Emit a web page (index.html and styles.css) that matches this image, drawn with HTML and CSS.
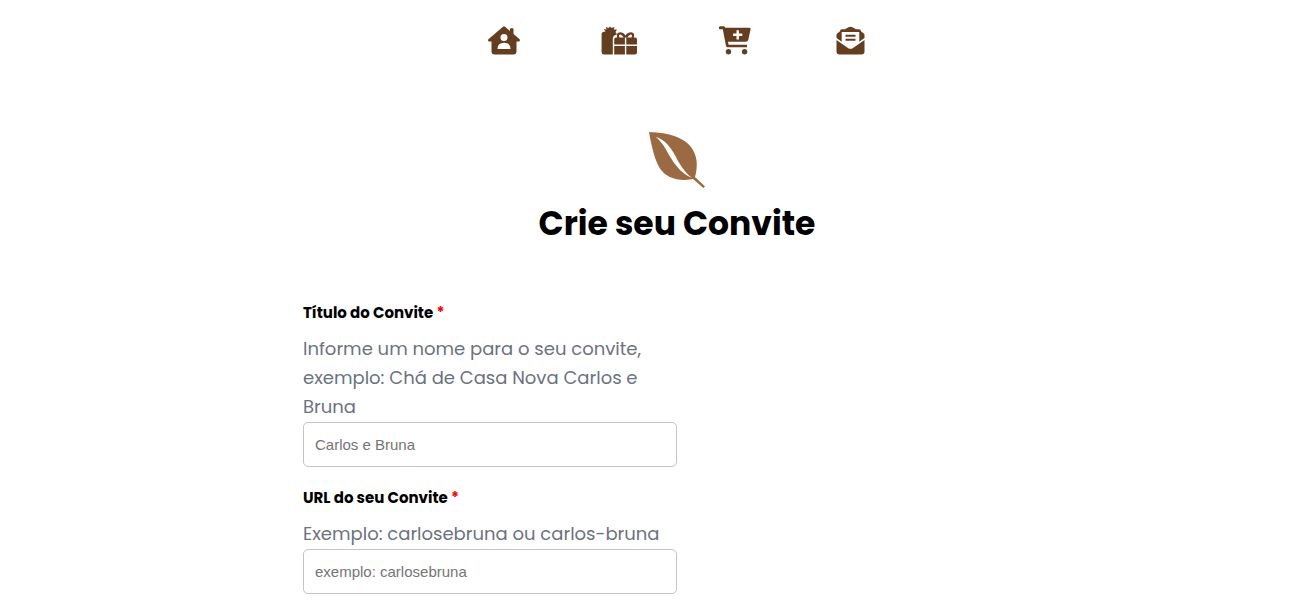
FILE: index.html
```html
<!DOCTYPE html>
<html lang="pt-BR">
<head>
<meta charset="utf-8">
<meta name="viewport" content="width=device-width, initial-scale=1">
<title>Crie seu Convite</title>
<link rel="stylesheet" href="styles.css">
</head>
<body>
<nav class="nav" aria-label="Principal">
  <a class="nav-link" href="#" aria-label="Início">
    <svg class="nav-icon" viewBox="0 0 36 32"><path fill-rule="evenodd" d="M18 1.700Q19 .9 20 1.700L25 6V4Q25 3.200 25.800 3.200H27.700Q28.500 3.200 28.500 4V9L34.600 14.200Q35.300 15.500 34.300 16.600H31.500V26.500Q31.500 29.500 28.500 29.500H9.500Q6.500 29.500 6.500 26.500V16.600H3.700Q2.600 15.500 3.400 14.200ZM19 9A3.500 3.500 0 1 0 19 16A3.500 3.500 0 1 0 19 9ZM12.500 24H25.500Q25.500 17.800 19 17.800T12.500 24Z"/></svg>
  </a>
  <a class="nav-link" href="#" aria-label="Presentes">
    <svg class="nav-icon" viewBox="0 0 36 32"><path d="M2.800 4 5.500 4.500 5 2 7.500 3 9 1.500 10.500 3 13.500 2 12.800 4.500 16 4.500 14.500 7 16 9.500Q11.800 10 11.800 14V29.500H3Q.6 29.500 .6 27V9Q.6 6.500 4.500 6.500Z"/><path fill-rule="evenodd" d="M15 12.500H16.200Q14.800 7.500 19 7.200Q22.300 7.200 24.500 10.500Q26.700 7.200 30 7.200Q34.200 7.500 32.800 12.500H34Q36 12.500 36 14.500V19.400H25.300V12.500H23.900V19.400H13.200V14.500Q13.200 12.500 15 12.500ZM18.500 12.500H22.700Q20.500 9.400 19.200 9.400Q17.300 9.400 18.500 12.500ZM26.300 12.500H30.500Q31.700 9.400 29.800 9.400Q28.500 9.400 26.300 12.500Z"/><path d="M13.200 21H23.900V29.500H13.200ZM25.300 21H36V27.500Q36 29.500 34 29.500H25.300Z"/></svg>
  </a>
  <a class="nav-link" href="#" aria-label="Adicionar ao carrinho">
    <svg class="nav-icon" viewBox="0 0 36 32"><path fill-rule="evenodd" d="M3.200 1.200H6.500Q8 1.200 8.400 2.700H32.500Q34 2.700 33.600 4.200L31.300 14.700Q30.800 16.800 28.700 16.800H11L11.600 19.700H30V22.200H10.600Q9.300 22.200 9 20.900L5.800 4.200H3.200Q1.800 4.200 1.800 2.700T3.200 1.200ZM19.500 5.200V8.600H16.100V11H19.500V14.400H21.900V11H25.300V8.600H21.900V5.200Z"/><circle cx="11.500" cy="26.800" r="2.700"/><circle cx="27.600" cy="26.800" r="2.700"/></svg>
  </a>
  <a class="nav-link" href="#" aria-label="Convites">
    <svg class="nav-icon" viewBox="0 0 36 32"><path d="M3.500 13V10Q3.500 9 4.500 8.200L7 6.200Q7 4.200 9 4.200H12L15.500 2.200Q17.500 1.200 19.500 2.200L23 4.200H26Q28 4.200 28 6.200L30.500 8.200Q31.500 9 31.500 10V13L26.300 16.700V7H8.700V16.700Z"/><path d="M3.500 15 15.300 23.200Q17.500 24.500 19.700 23.200L31.500 15V26.500Q31.500 29.500 28.500 29.500H6.500Q3.500 29.500 3.500 26.500Z"/><path d="M12.500 9.700H22.500V11.700H12.500ZM12.500 13.700H22.500V15.700H12.500Z"/></svg>
  </a>
</nav>
<main class="page">
  <header class="intro">
    <svg class="leaf" viewBox="0 0 56 56" aria-hidden="true"><path fill-rule="evenodd" d="M0 0Q31 1 42 15Q51 27 46 45L56 54.500L54.500 56L44 47Q22 51 12 38Q5 29 0 0ZM7 5Q14 11 20 23Q30 41 43 46Q36 41 29 29Q19 8 7 5Z"/></svg>
    <h1 class="title">Crie seu Convite</h1>
  </header>
  <form class="form">
    <div class="field">
      <label class="label" for="titulo">Título do Convite <span class="required">*</span></label>
      <p class="hint" id="titulo-hint">Informe um nome para o seu convite, exemplo: Chá de Casa Nova Carlos e Bruna</p>
      <input class="input" id="titulo" type="text" placeholder="Carlos e Bruna" aria-describedby="titulo-hint" required>
    </div>
    <div class="field">
      <label class="label" for="url">URL do seu Convite <span class="required">*</span></label>
      <p class="hint" id="url-hint">Exemplo: carlosebruna ou carlos-bruna</p>
      <input class="input" id="url" type="text" placeholder="exemplo: carlosebruna" aria-describedby="url-hint" required>
    </div>
  </form>
</main>
</body>
</html>
```
FILE: styles.css
```css
* {
  box-sizing: border-box;
}

body {
  margin: 0;
  padding-left: 39px;
  background: #fff;
  color: #000;
  font-family: Poppins, Inter, sans-serif;
}

.nav {
  display: flex;
  justify-content: center;
  gap: 80px;
  padding-top: 25px;
}

.nav-link {
  color: #653e20;
}

.nav-icon {
  display: block;
  width: 36px;
  height: 32px;
  fill: currentColor;
}

.page {
  max-width: 748px;
  margin: 0 auto;
  padding-top: 75px;
}

.intro {
  text-align: center;
}

.leaf {
  display: block;
  width: 56px;
  height: 56px;
  margin: 0 auto 11px;
  fill: #9b6a42;
}

.title {
  margin: 0;
  font-size: 33px;
  line-height: 50px;
  font-weight: 700;
}

.form {
  display: grid;
  grid-template-columns: 1fr 1fr;
  row-gap: 18px;
  padding-top: 51px;
}

.field {
  grid-column: 1;
}

.label {
  display: block;
  margin-bottom: 9px;
  font-size: 15px;
  line-height: 25px;
  font-weight: 700;
}

.required {
  color: #f00;
}

.hint {
  margin: 0 0 1px;
  color: #6b7280;
  font-size: 18px;
  line-height: 29px;
}

.input {
  display: block;
  width: 100%;
  height: 45px;
  padding: 0 11px;
  border: 1px solid #c4c4c4;
  border-radius: 5px;
  background: #fff;
  font-family: "Liberation Sans", Arial, sans-serif;
  font-size: 15px;
}

.input::placeholder {
  color: #757575;
}
```
